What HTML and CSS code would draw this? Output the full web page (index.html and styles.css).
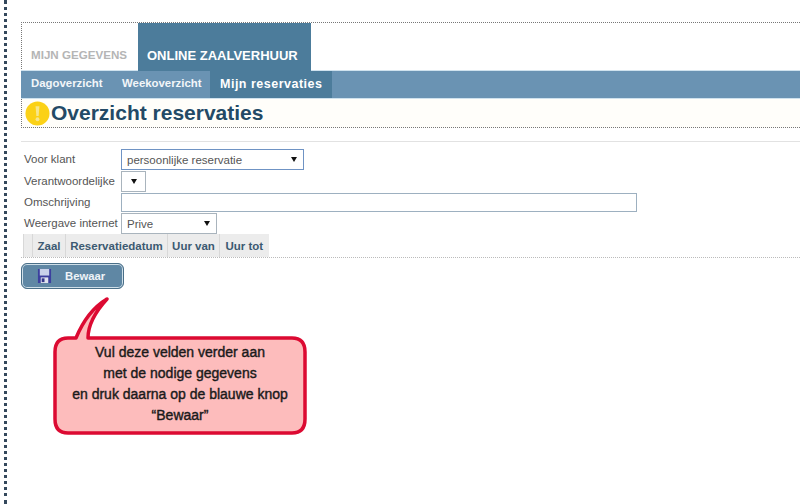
FILE: index.html
```html
<!DOCTYPE html>
<html lang="en">
<head>
   <title>Overzicht reservaties</title>
   <link rel="stylesheet" href="styles.css">
</head>
<body>
   <div id="page">
      <div id="tabs">
         <div class="tab">MIJN GEGEVENS</div>
         <div class="tab tab-active">ONLINE ZAALVERHUUR</div>
      </div>
      <div id="nav">
         <div class="nav-item">Dagoverzicht</div>
         <div class="nav-item">Weekoverzicht</div>
         <div class="nav-item nav-active">Mijn reservaties</div>
      </div>
      <div id="title">
         <svg class="warn" width="25" height="25" viewBox="0 0 26 26">
            <circle cx="13" cy="13" r="12.500" fill="#fbd116"/>
            <path d="M11 5.500h4l-.8 10h-2.400z" fill="#f6e68c"/>
            <circle cx="13" cy="19" r="2" fill="#f6e68c"/>
         </svg>
         <h1>Overzicht reservaties</h1>
      </div>
      <div id="form">
         <div class="row row-klant">
            <label>Voor klant</label>
            <div class="select select-focus select-klant"><span>persoonlijke reservatie</span><i class="arrow"></i></div>
         </div>
         <div class="row row-verant">
            <label>Verantwoordelijke</label>
            <div class="select select-small"><span></span><i class="arrow"></i></div>
         </div>
         <div class="row row-omschr">
            <label>Omschrijving</label>
            <input type="text" class="textbox">
         </div>
         <div class="row row-weergave">
            <label>Weergave internet</label>
            <div class="select select-weergave"><span>Prive</span><i class="arrow"></i></div>
         </div>
         <table id="grid">
            <tr>
               <th class="col-blank"></th>
               <th class="col-zaal">Zaal</th>
               <th class="col-datum">Reservatiedatum</th>
               <th class="col-van">Uur van</th>
               <th class="col-tot">Uur tot</th>
            </tr>
         </table>
      </div>
      <button id="save">
         <svg width="15" height="16" viewBox="0 0 16 17">
            <rect x="1" y="1" width="14" height="15" fill="#3c3f9e"/>
            <rect x="3" y="1" width="10" height="7" fill="#c9d2ea"/>
            <rect x="4" y="10" width="8" height="6" fill="#dfe3ee"/>
            <rect x="5" y="11" width="3" height="4" fill="#34378a"/>
         </svg>
         <span>Bewaar</span>
      </button>
   </div>
   <svg id="bubble-shape" width="262" height="146" viewBox="0 0 262 146">
      <path d="M17 41H25C32 24 41 11 56 2C45 14 37 27 37 41H241C250 41 254 46 254 55V122C254 131 250 136 241 136H17C8 136 4 131 4 122V55C4 46 8 41 17 41Z" fill="#fdbcbc" stroke="#dc0a32" stroke-width="3.500" stroke-linejoin="round"/>
   </svg>
   <div id="bubble-text">
      <p>Vul deze velden verder aan</p>
      <p>met de nodige gegevens</p>
      <p>en druk daarna op de blauwe knop</p>
      <p>“Bewaar”</p>
   </div>
</body>
</html>
```

FILE: styles.css
```css
* {
    margin: 0;
    padding: 0;
    box-sizing: border-box;
    font-family: "Liberation Sans", Arial, sans-serif;
}
html, body {
    height: 100%;
    overflow: hidden;
}
body {
    background: #fff;
    position: relative;
    padding-left: 4px;
}
#page {
    border-left: 3px dotted #34485c;
    height: 100%;
    padding: 22px 0 0 14px;
}
#tabs {
    display: flex;
    height: 49px;
    border-top: 1px dotted #777;
    border-left: 1px dotted #777;
}
.tab {
    height: 48px;
    padding: 25px 10px 0 9px;
    font-size: 11.600px;
    font-weight: bold;
    color: #b5b5b5;
    width: 116px;
}
.tab-active {
    background: #4c7c9b;
    color: #fff;
    font-size: 13px;
    width: 173px;
    padding-left: 9px;
    white-space: nowrap;
}
#nav {
    display: flex;
    height: 29px;
    background: #6a93b3;
    border-top: 1px solid #cfe2ee;
    border-bottom: 1px solid #cfe2ee;
    margin-top: -1px;
}
.nav-item {
    color: #f2f6f9;
    font-size: 11.400px;
    font-weight: bold;
    padding: 6px 0 0 10px;
    width: 91px;
}
.nav-item + .nav-item {
    width: 98px;
    padding-left: 10px;
}
.nav-item + .nav-item.nav-active {
    background: #4c7c9b;
    color: #fff;
    font-size: 12.500px;
    letter-spacing: 0.500px;
    width: 122px;
    padding: 6px 0 0 10px;
}
#title {
    display: flex;
    align-items: center;
    height: 29px;
    border-bottom: 1px dotted #777;
    border-left: 1px dotted #777;
    padding-left: 3px;
    background: #fffefa;
}
h1 {
    font-size: 21px;
    font-weight: bold;
    color: #234a66;
    margin-left: 1px;
}
.warn {
    flex: none;
}
#form {
    margin-top: 13px;
    border-top: 1px solid #e2e2e2;
    border-bottom: 1px dotted #bbb;
    padding-top: 7px;
    height: 117px;
}
.row {
    display: flex;
    align-items: center;
    font-size: 11.500px;
    color: #555;
}
.row label {
    width: 100px;
    padding-left: 3px;
    padding-bottom: 2px;
    flex: none;
    white-space: nowrap;
}
.row-klant {
    height: 21px;
    margin-bottom: 1px;
}
.row-verant {
    height: 21px;
    margin-bottom: 1px;
}
.row-omschr {
    height: 19px;
    margin-bottom: 1px;
}
.row-weergave {
    height: 21px;
}
.select {
    display: flex;
    align-items: center;
    justify-content: space-between;
    height: 100%;
    border: 1px solid #a9b4bd;
    background: #fff;
    padding: 0 6px 0 5px;
    font-size: 11.500px;
    color: #555;
}
.select-focus {
    border: 1px solid #6f93c4;
}
.select-klant {
    width: 183px;
}
.select-small {
    width: 25px;
    padding: 0 9px;
}
.select-weergave {
    width: 96px;
}
.arrow {
    width: 0;
    height: 0;
    border-left: 3px solid transparent;
    border-right: 3px solid transparent;
    border-top: 5px solid #111;
}
.textbox {
    width: 516px;
    height: 100%;
    border: 1px solid #9db0c0;
}
#grid {
    border-collapse: collapse;
    height: 23px;
    margin-left: 2px;
}
#grid th {
    background: #ececec;
    border-left: 1px solid #d8d8d8;
    color: #3c5a72;
    font-size: 11.500px;
    font-weight: bold;
    padding: 0;
    height: 23px;
    text-align: center;
}
.col-blank { width: 9px; min-width: 9px; }
.col-zaal { width: 33px; min-width: 33px; }
.col-datum { width: 102px; min-width: 102px; }
.col-van { width: 52px; min-width: 52px; }
.col-tot { width: 49px; min-width: 49px; }
#save {
    display: flex;
    align-items: center;
    width: 103px;
    height: 26px;
    margin-top: 5px;
    background: #5f87a4;
    border: 1px solid #4a6f88;
    box-shadow: inset 0 0 0 1px #cfdfe8;
    border-radius: 6px;
    color: #eef3f7;
    font-size: 11.300px;
    font-weight: bold;
    padding-left: 15px;
}
#save span {
    margin-left: 13px;
}
#bubble-shape {
    position: absolute;
    left: 51px;
    top: 297px;
}
#bubble-text {
    position: absolute;
    left: 54px;
    top: 342px;
    width: 252px;
    text-align: center;
    font-size: 14px;
    line-height: 21px;
    color: #1a1a1a;
    -webkit-text-stroke: 0.400px #1a1a1a;
}
```
